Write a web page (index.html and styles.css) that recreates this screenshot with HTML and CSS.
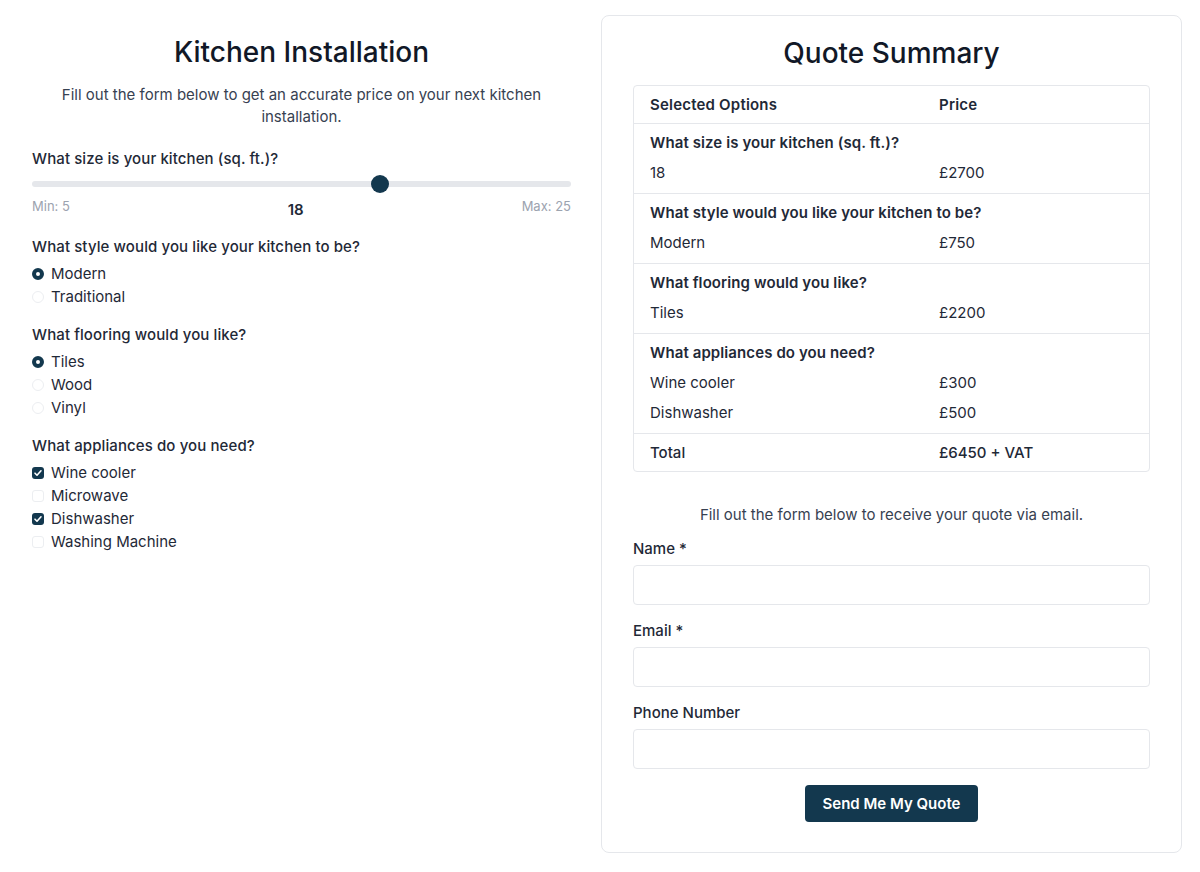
FILE: index.html
```html
<!DOCTYPE html>
<html lang="en">
<head>
    <meta charset="UTF-8">
    <meta name="viewport" content="width=device-width, initial-scale=1.0">
    <title>Kitchen Installation - Quote</title>
    <link rel="stylesheet" href="styles.css">
</head>
<body>
    <div id="page">
        <div id="calculator">
            <h1>Kitchen Installation</h1>
            <p class="intro">Fill out the form below to get an accurate price on your next kitchen installation.</p>

            <div class="question">
                <div class="question-title">What size is your kitchen (sq. ft.)?</div>
                <input type="range" id="size" min="5" max="25" value="18">
                <div class="range-info">
                    <span class="range-limit">Min: 5</span>
                    <span class="range-value" id="sizeValue">18</span>
                    <span class="range-limit">Max: 25</span>
                </div>
            </div>

            <div class="question">
                <div class="question-title">What style would you like your kitchen to be?</div>
                <label class="option"><span class="radio checked"></span>Modern</label>
                <label class="option"><span class="radio"></span>Traditional</label>
            </div>

            <div class="question">
                <div class="question-title">What flooring would you like?</div>
                <label class="option"><span class="radio checked"></span>Tiles</label>
                <label class="option"><span class="radio"></span>Wood</label>
                <label class="option"><span class="radio"></span>Vinyl</label>
            </div>

            <div class="question">
                <div class="question-title">What appliances do you need?</div>
                <label class="option"><span class="check checked"><svg viewBox="0 0 12 12" width="12" height="12"><path d="M3 6.2l2 2 4-4.4" fill="none" stroke="#fff" stroke-width="1.6" stroke-linecap="round" stroke-linejoin="round"/></svg></span>Wine cooler</label>
                <label class="option"><span class="check"></span>Microwave</label>
                <label class="option"><span class="check checked"><svg viewBox="0 0 12 12" width="12" height="12"><path d="M3 6.2l2 2 4-4.4" fill="none" stroke="#fff" stroke-width="1.6" stroke-linecap="round" stroke-linejoin="round"/></svg></span>Dishwasher</label>
                <label class="option"><span class="check"></span>Washing Machine</label>
            </div>
        </div>

        <div id="summary">
            <h1>Quote Summary</h1>
            <div class="quote-table">
                <div class="row head"><span>Selected Options</span><span>Price</span></div>
                <div class="group">
                    <div class="group-title">What size is your kitchen (sq. ft.)?</div>
                    <div class="row"><span>18</span><span>£2700</span></div>
                </div>
                <div class="group">
                    <div class="group-title">What style would you like your kitchen to be?</div>
                    <div class="row"><span>Modern</span><span>£750</span></div>
                </div>
                <div class="group">
                    <div class="group-title">What flooring would you like?</div>
                    <div class="row"><span>Tiles</span><span>£2200</span></div>
                </div>
                <div class="group">
                    <div class="group-title">What appliances do you need?</div>
                    <div class="row"><span>Wine cooler</span><span>£300</span></div>
                    <div class="row"><span>Dishwasher</span><span>£500</span></div>
                </div>
                <div class="row total"><span>Total</span><span>£6450 + VAT</span></div>
            </div>

            <p class="email-note">Fill out the form below to receive your quote via email.</p>
            <form id="quote-form">
                <label class="field-label" for="name">Name *</label>
                <input class="field" type="text" id="name">
                <label class="field-label" for="email">Email *</label>
                <input class="field" type="email" id="email">
                <label class="field-label" for="phone">Phone Number</label>
                <input class="field" type="tel" id="phone">
                <button type="button" id="send-btn">Send Me My Quote</button>
            </form>
        </div>
    </div>
</body>
</html>
```

FILE: styles.css
```css
body {
    margin: 0;
    font-family: Inter, "Noto Sans", Arial, sans-serif;
    font-size: 15px;
    color: #1f2937;
    background: #ffffff;
}
#page {
    display: flex;
    align-items: flex-start;
    gap: 30px;
    padding: 15px 18px 0 32px;
}
h1 {
    margin: 0;
    font-size: 28px;
    line-height: 36px;
    font-weight: 500;
    color: #111827;
    text-align: center;
}
#calculator {
    width: 539px;
    flex: none;
    padding-top: 19px;
}
.intro {
    margin: 14px 0 20px;
    text-align: center;
    line-height: 22px;
    color: #374151;
    padding: 0 24px;
}
.question {
    margin-bottom: 16px;
}
.question-title {
    line-height: 22px;
    font-weight: 500;
    margin-bottom: 4px;
    letter-spacing: 0.1px;
}
input[type=range] {
    -webkit-appearance: none;
    appearance: none;
    display: block;
    width: 100%;
    height: 28px;
    margin: -4px 0 0;
    background: transparent;
}
input[type=range]::-webkit-slider-runnable-track {
    height: 6px;
    background: #e5e7eb;
    border-radius: 3px;
}
input[type=range]::-webkit-slider-thumb {
    -webkit-appearance: none;
    width: 18px;
    height: 18px;
    margin-top: -6px;
    border-radius: 50%;
    background: #13384e;
    border: none;
}
.range-info {
    display: flex;
    justify-content: space-between;
    align-items: flex-start;
    margin-bottom: 1px;
}
.range-limit {
    font-size: 13px;
    line-height: 16px;
    color: #9ca3af;
}
.range-value {
    font-weight: 600;
    padding-top: 2px;
    line-height: 20px;
}
.option {
    display: flex;
    align-items: center;
    gap: 7px;
    line-height: 23px;
    color: #1f2937;
}
.radio, .check {
    width: 12px;
    height: 12px;
    box-sizing: border-box;
    border: 1px solid #eceef1;
    flex: none;
}
.radio {
    border-radius: 50%;
}
.radio.checked {
    border: 4px solid #13384e;
    background: #ffffff;
}
.check {
    border-radius: 3px;
}
.check.checked {
    border: none;
    background: #13384e;
}
.check svg {
    display: block;
}
#summary {
    flex: 1;
    border: 1px solid #e5e7eb;
    border-radius: 8px;
    padding: 19px 31px 30px;
}
.quote-table {
    margin-top: 14px;
    border: 1px solid #e5e7eb;
    border-radius: 4px;
}
.row {
    display: grid;
    grid-template-columns: 289px 1fr;
    padding: 0 16px;
    line-height: 30px;
}
.row.head {
    font-weight: 600;
    line-height: 37px;
    border-bottom: 1px solid #e5e7eb;
    letter-spacing: 0.2px;
}
.group {
    padding: 4px 0 5px;
    border-bottom: 1px solid #e5e7eb;
}
.group-title {
    padding: 0 16px;
    line-height: 30px;
    font-weight: 600;
    letter-spacing: 0.1px;
}
.row.total {
    line-height: 37px;
    font-weight: 500;
}
.email-note {
    margin: 32px 0 12px;
    text-align: center;
    line-height: 22px;
    color: #374151;
}
#quote-form {
    display: flex;
    flex-direction: column;
}
.field-label {
    line-height: 22px;
    font-weight: 500;
    margin-bottom: 5px;
}
.field {
    height: 40px;
    box-sizing: border-box;
    border: 1px solid #e5e7eb;
    border-radius: 4px;
    margin: 0 0 15px;
    font: inherit;
    padding: 0 12px;
}
#send-btn {
    align-self: center;
    margin-top: 1px;
    height: 37px;
    padding: 0 18px;
    background: #13384e;
    color: #ffffff;
    border: none;
    border-radius: 4px;
    font: inherit;
    font-weight: 600;
    cursor: pointer;
}
```
